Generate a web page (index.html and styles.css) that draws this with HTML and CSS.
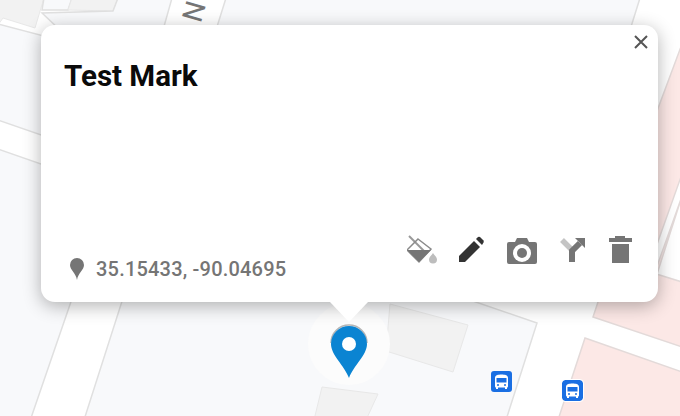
FILE: index.html
```html
<!DOCTYPE html>
<html lang="en">
<head>
    <meta charset="UTF-8">
    <title>Test Mark</title>
    <link rel="stylesheet" href="styles.css">
</head>
<body>
    <div class="map">
        <svg class="map-base" width="680" height="416" viewBox="0 0 680 416">
            <!-- blocks, the white between them is the roads -->
            <polygon class="block-gray" points="-2,-2 44,-2 35,28 3,18 -2,25"/>
            <polygon class="block" points="44,-2 72,-2 68,10 42,10"/>
            <polygon class="block-gray" points="72,-2 118,-2 113,11 68,10"/>
            <polygon class="block" points="-2,24 44,36 44,136 -2,120"/>
            <polygon class="block" points="-2,149 44,165 75,290 31,418 -2,418"/>
            <polygon class="block" points="118,-2 172,-2 163,30 60,30 42,13 113,11"/>
            <polygon class="block" points="226,-2 640,-2 630,30 216,30"/>
            <polygon class="block" points="124,295 470,300 537,323 506,420 84,420"/>
            <polygon class="block-gray" points="390,304 468,325 453,372 386,351"/>
            <polygon class="block-gray" points="322,387 378,394 366,420 314,420"/>
            <polygon class="block-pink" points="682,44 650,130 650,264 682,174"/>
            <polygon class="block-pink" points="682,196 650,286 650,272 682,282 682,347 593,317 600,296 650,296"/>
            <polygon class="block-pink" points="585,338 682,372 682,420 558,420"/>
            <text class="street" transform="translate(187 -1) rotate(106)" font-size="28">N</text>
        </svg>

        <div class="marker">
            <svg width="82" height="82" viewBox="0 0 82 82">
                <circle cx="41" cy="41" r="41" fill="#fcfcfc"/>
                <path d="M23 41 A18 18 0 0 1 59 41" transform="translate(0 -1)" fill="none" stroke="#b5b5b5" stroke-width="1.5"/>
                <path d="M41 75 C36 62 23 52 23 41 A18 18 0 0 1 59 41 C59 52 46 62 41 75 Z" fill="#0b84d2"/>
                <circle cx="41" cy="41" r="7" fill="#fff"/>
            </svg>
        </div>

        <svg class="bus bus-one" width="21" height="21" viewBox="0 0 21 21">
            <rect width="21" height="21" rx="3" fill="#1a6fe3"/>
            <path d="M4 7 C4 4 7 3.500 10.500 3.500 C14 3.500 17 4 17 7 V15 C17 16 16.500 16.500 16 16.500 V18 H14 V16.500 H7 V18 H5 V16.500 C4.500 16.500 4 16 4 15 Z" fill="#fff"/>
            <rect x="5.500" y="7" width="10" height="4.500" fill="#1a6fe3"/>
            <circle cx="7" cy="14" r="1" fill="#1a6fe3"/>
            <circle cx="14" cy="14" r="1" fill="#1a6fe3"/>
        </svg>
        <svg class="bus bus-two" width="21" height="21" viewBox="0 0 21 21">
            <rect width="21" height="21" rx="3" fill="#1a6fe3"/>
            <path d="M4 7 C4 4 7 3.500 10.500 3.500 C14 3.500 17 4 17 7 V15 C17 16 16.500 16.500 16 16.500 V18 H14 V16.500 H7 V18 H5 V16.500 C4.500 16.500 4 16 4 15 Z" fill="#fff"/>
            <rect x="5.500" y="7" width="10" height="4.500" fill="#1a6fe3"/>
            <circle cx="7" cy="14" r="1" fill="#1a6fe3"/>
            <circle cx="14" cy="14" r="1" fill="#1a6fe3"/>
        </svg>

        <div class="popup">
            <button class="close" aria-label="Close">
                <svg width="14" height="14" viewBox="0 0 14 14">
                    <path d="M1 1 L13 13 M13 1 L1 13" stroke="#555" stroke-width="2" fill="none"/>
                </svg>
            </button>
            <h1 class="title">Test Mark</h1>
            <div class="popup-footer">
                <div class="coords">
                    <svg width="14" height="22" viewBox="0 0 14 22">
                        <path d="M7 22 C6 15 0 12 0 7 A7 7 0 0 1 14 7 C14 12 8 15 7 22 Z" fill="#757575"/>
                    </svg>
                    <span>35.15433, -90.04695</span>
                </div>
                <div class="actions">
                    <svg width="30" height="30" viewBox="0 0 30 30">
                        <path d="M2 1 L20 19" stroke="#999" stroke-width="2" fill="none"/>
                        <path d="M11 4 L24 14 L12 27 L0 15 Z" fill="none" stroke="#8a8a8a" stroke-width="1.500"/>
                        <path d="M0 15 H24 L12 27 Z" fill="#757575"/>
                        <path d="M26 18 C27 20 30 22 30 24.500 A4 4 0 0 1 22 24.500 C22 22 25 20 26 18 Z" fill="#bdbdbd"/>
                    </svg>
                    <svg width="30" height="30" viewBox="0 0 30 30">
                        <path d="M2 27 V21 L17 6 L23 12 L8 27 Z" fill="#333"/>
                        <path d="M19 4 L21 2 Q22 1.500 23 2 L26.500 5.500 Q27 6.500 26.500 7.500 L25 10 Z" fill="#333"/>
                    </svg>
                    <svg width="30" height="30" viewBox="0 0 30 30">
                        <path d="M2 7 H8 L10 3 H20 L22 7 H28 Q30 7 30 9 V27 Q30 29 28 29 H2 Q0 29 0 27 V9 Q0 7 2 7 Z" fill="#757575"/>
                        <circle cx="15" cy="18" r="9" fill="#fff"/>
                        <circle cx="15" cy="18" r="5" fill="#757575"/>
                    </svg>
                    <svg width="30" height="30" viewBox="0 0 30 30">
                        <path d="M5 5 L16 16" stroke="#c4c4c4" stroke-width="5.500" fill="none"/>
                        <path d="M15 27 V16 L23 8" stroke="#757575" stroke-width="6" fill="none"/>
                        <path d="M18 3 H28 V13 Z" fill="#757575"/>
                    </svg>
                    <svg width="30" height="30" viewBox="0 0 30 30">
                        <path d="M8 3 V1 H18 V3 H25 V7 H2 V3 Z" fill="#757575"/>
                        <rect x="5" y="9" width="17" height="19" fill="#757575"/>
                    </svg>
                </div>
            </div>
            <div class="popup-tail"></div>
        </div>
    </div>
</body>
</html>
```

FILE: styles.css
```css
body {
    margin: 0;
    font-family: Roboto, "Liberation Sans", sans-serif;
}
.map {
    position: relative;
    width: 680px;
    height: 416px;
    overflow: hidden;
    background: #fff;
}
.map-base {
    position: absolute;
    left: 0;
    top: 0;
}
.block {
    fill: #f8f9fb;
    stroke: #e0e0e0;
    stroke-width: 1.5;
}
.block-gray {
    fill: #f2f2f2;
    stroke: #e8e8e8;
    stroke-width: 1;
}
.block-pink {
    fill: #fce8e6;
    stroke: #e3dad9;
    stroke-width: 1.5;
}
.street {
    fill: #757575;
    font-family: Roboto, sans-serif;
}
.marker {
    position: absolute;
    left: 308px;
    top: 303px;
    width: 82px;
    height: 82px;
}
.bus {
    position: absolute;
}
.bus-one {
    left: 491px;
    top: 371px;
}
.bus-two {
    left: 562px;
    top: 380px;
    outline: 1px solid #fff;
    border-radius: 3px;
}
.popup {
    position: absolute;
    left: 41px;
    top: 25px;
    width: 617px;
    height: 277px;
    box-sizing: border-box;
    padding: 33px 21px 21px 23px;
    display: flex;
    flex-direction: column;
    justify-content: space-between;
    background: #fff;
    border-radius: 14px;
    box-shadow: 0 4px 18px rgba(0, 0, 0, 0.3);
}
.title {
    margin: 0;
    font-size: 29.5px;
    line-height: 36px;
    font-weight: 700;
    color: #0a0a0a;
}
.close {
    position: absolute;
    right: 10px;
    top: 10px;
    width: 14px;
    height: 14px;
    padding: 0;
    border: none;
    background: none;
}
.close svg {
    display: block;
}
.popup-footer {
    display: flex;
    justify-content: space-between;
    align-items: flex-start;
}
.coords {
    display: flex;
    align-items: center;
    gap: 12px;
    margin: 22px 0 0 6px;
    font-size: 20px;
    letter-spacing: 0.2px;
    font-weight: 500;
    color: #757575;
}
.actions {
    display: flex;
    gap: 20px;
}
.actions svg {
    display: block;
}
.popup-tail {
    position: absolute;
    left: 289px;
    top: 277px;
    width: 38px;
    height: 20px;
    background: #fff;
    clip-path: polygon(0 0, 100% 0, 50% 100%);
}
```
